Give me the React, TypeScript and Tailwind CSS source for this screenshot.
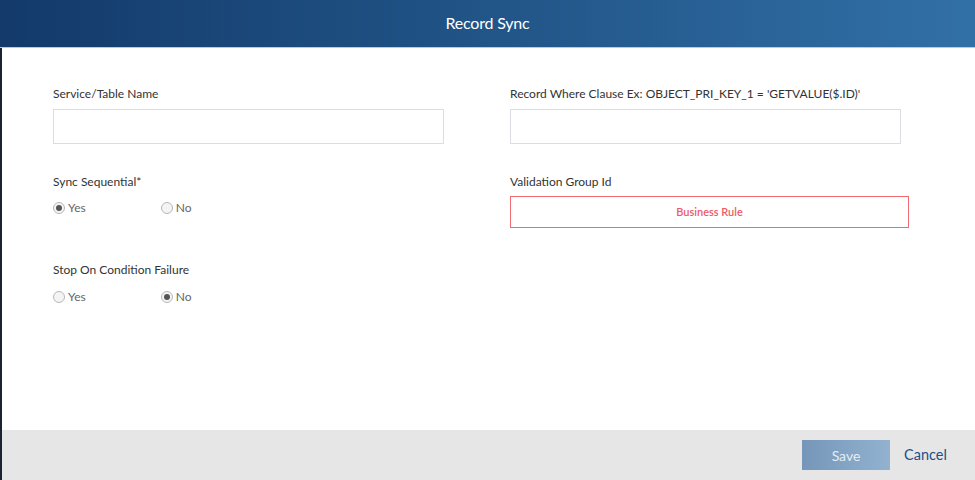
import React from "react";

function Radio({ checked, label }: { checked?: boolean; label: string }) {
  return (
    <div className="flex items-center gap-[3px]">
      <span className="w-[12px] h-[12px] rounded-full border border-[#b8b8b8] bg-[#f4f4f4] flex items-center justify-center">
        {checked && <span className="w-[6px] h-[6px] rounded-full bg-[#555]" />}
      </span>
      <span className="text-[12px] text-[#666]">{label}</span>
    </div>
  );
}

export default function App() {
  return (
    <div
      className="w-[975px] h-[480px] bg-white flex flex-col overflow-hidden"
      style={{ fontFamily: "Lato, 'Open Sans', sans-serif" }}
    >
      <div className="h-[48px] shrink-0 bg-gradient-to-r from-[#133a6a] to-[#3170a6] flex items-center justify-center border-b border-[#c4c8cc]">
        <span className="text-white text-[16px] tracking-[-0.2px] -mt-[2px]">Record Sync</span>
      </div>
      <div className="flex-1 flex border-l-2 border-[#1c2330]">
        <div className="flex-1 flex flex-col">
          <div className="flex-1 flex pl-[51px] pt-[39px]">
            <div className="w-[391px] flex flex-col">
              <div className="text-[12px] text-[#333] leading-[14px]">Service/Table Name</div>
              <div className="mt-[8px] h-[35px] border border-[#dcdce2]" />
              <div className="mt-[31px] text-[12px] text-[#333] leading-[14px]">Sync Sequential*</div>
              <div className="mt-[10px] flex gap-[75px]">
                <Radio checked label="Yes" />
                <Radio label="No" />
              </div>
              <div className="mt-[46px] text-[12px] text-[#333] leading-[14px]">Stop On Condition Failure</div>
              <div className="mt-[11px] flex gap-[75px]">
                <Radio label="Yes" />
                <Radio checked label="No" />
              </div>
            </div>
            <div className="ml-[66px] w-[399px] flex flex-col">
              <div className="text-[12px] text-[#333] leading-[14px]">
                Record Where Clause Ex: OBJECT_PRI_KEY_1 = 'GETVALUE($.ID)'
              </div>
              <div className="mt-[8px] w-[391px] h-[35px] border border-[#dcdce2]" />
              <div className="mt-[31px] text-[12px] text-[#333] leading-[14px]">Validation Group Id</div>
              <div className="mt-[7px] h-[32px] border border-[#f06a72] flex items-center justify-center">
                <span className="text-[11px] font-semibold text-[#ee5a66]">Business Rule</span>
              </div>
            </div>
          </div>
          <div className="h-[50px] shrink-0 bg-[#e6e6e6] flex items-center justify-end pr-[26px]">
            <div className="w-[88px] h-[30px] bg-gradient-to-r from-[#7696b9] to-[#92b2d0] flex items-center justify-center text-[14px] text-[#e4ecf4]">
              Save
            </div>
            <span className="ml-[14px] w-[45px] text-[14.5px] text-[#1e4f86]">Cancel</span>
          </div>
        </div>
      </div>
    </div>
  );
}
